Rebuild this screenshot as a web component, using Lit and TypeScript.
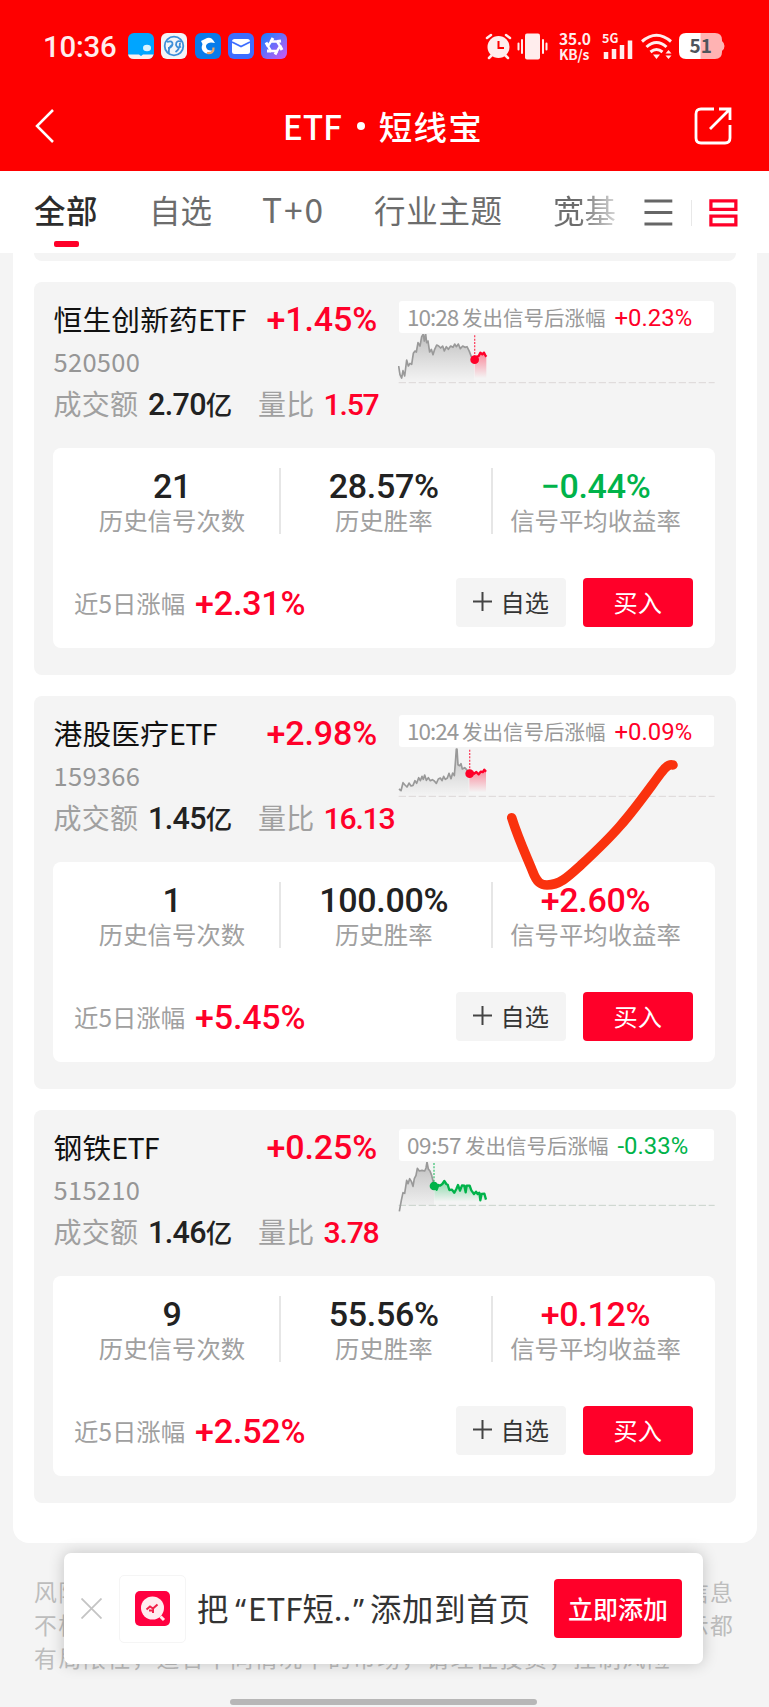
import { LitElement, html, css, svg } from "lit";
import { customElement, property } from "lit/decorators.js";

interface Fund {
  name: string; change: string; code: string; amount: string; ratio: string;
  time: string; since: string; signals: string; winRate: string; avg: string; five: string;
  chart: { box: string; past: string; now: string; dot: [number, number]; top: number; base: number; color: string };
}

const RED = "#ff0029";
const GREEN = "#00b34a";

const funds: Fund[] = [
  {
    name: "恒生创新药ETF", change: "+1.45%", code: "520500", amount: "2.70", ratio: "1.57",
    time: "10:28", since: "+0.23%", signals: "21", winRate: "28.57%", avg: "−0.44%", five: "+2.31%",
    chart: {
      box: "42 494 954 170",
      past: "44,590 48,616 53,626 57,604 62,620 68,572 73,590 78,582 83,585 88,552 93,545 97,548 102,520 108,530 113,502 118,494 121,515 125,494 128,520 132,515 137,548 142,540 147,556 152,540 158,527 164,530 170,536 176,530 181,545 187,532 193,540 200,530 207,534 212,524 217,532 223,524 229,538 236,530 243,534 249,532 256,546 262,562 270,570",
      now: "272,570 279,562 284,560 289,550 295,555 300,550 304,558 307,562",
      dot: [272, 571], top: 498, base: 640, color: RED,
    },
  },
  {
    name: "港股医疗ETF", change: "+2.98%", code: "159366", amount: "1.45", ratio: "16.13",
    time: "10:24", since: "+0.09%", signals: "1", winRate: "100.00%", avg: "+2.60%", five: "+5.45%",
    chart: {
      box: "42 175 954 170",
      past: "45,298 51,303 57,279 63,286 69,292 75,280 81,289 87,287 93,273 98,281 104,264 109,273 114,260 118,269 122,256 127,272 133,264 139,273 145,270 151,274 157,281 163,268 169,265 174,273 179,260 184,269 190,265 195,251 201,267 206,250 211,258 214,220 217,178 219,178 222,225 227,228 231,222 235,238 242,234 248,240 254,248",
      now: "256,251 264,247 270,252 277,247 284,254 290,246 297,247 301,240 306,246",
      dot: [257, 252], top: 180, base: 320, color: RED,
    },
  },
  {
    name: "钢铁ETF", change: "+0.25%", code: "515210", amount: "1.46", ratio: "3.78",
    time: "09:57", since: "-0.33%", signals: "9", winRate: "55.56%", avg: "+0.12%", five: "+2.52%",
    chart: {
      box: "42 155 954 170",
      past: "46,303 52,270 57,247 62,249 68,210 72,220 77,205 82,213 87,228 91,205 96,195 100,174 106,182 114,180 122,182 126,173 129,155 133,176 138,182 143,195 147,212 150,224",
      now: "151,226 158,238 163,224 168,226 175,221 181,212 187,221 191,223 196,239 204,238 211,247 217,236 222,224 228,241 234,225 241,226 245,246 248,226 257,226 262,240 270,251 276,244 281,251 286,247 289,270 293,251 301,250 306,268",
      dot: [150, 227], top: 158, base: 285, color: GREEN,
    },
  },
];

const tone = (v: string) => (/^[-−]/.test(v) ? "down" : "up");

@customElement("fund-card")
class FundCard extends LitElement {
  @property({ attribute: false }) fund!: Fund;

  static styles = css`
    :host { display: block; box-sizing: border-box; height: 393px; padding: 19px 19.5px 0 20px; border-radius: 8px; background: #f4f4f4; color: #222; }
    .num { font-family: Roboto, "Noto Sans CJK SC", sans-serif; font-weight: 500; }
    .up { color: #ff0029; }
    .down { color: #00b34a; }
    .head { display: grid; grid-template-columns: 345.5px 1fr; height: 147px; }
    .line { display: flex; align-items: baseline; white-space: nowrap; }
    .title { height: 40px; line-height: 36px; font-size: 28.7px; color: #111; }
    .name { width: 213px; letter-spacing: .2px; }
    .latin { letter-spacing: -.8px; }
    .title .num { font-size: 34px; letter-spacing: -.1px; }
    .code { height: 42.500px; line-height: 40px; font-size: 25.5px; letter-spacing: .3px; color: #969696; }
    .volume { line-height: 40px; font-size: 28px; letter-spacing: .2px; color: #a0a0a0; }
    .volume > * { flex: none; }
    .amount { margin-left: 10px; width: 110px; color: #222; font-size: 30.5px; letter-spacing: -.7px; }
    .yi { font-family: "Noto Sans CJK SC", sans-serif; font-size: 26.5px; }
    .ratio { margin-left: 9px; font-size: 30.2px; letter-spacing: -1.2px; }
    .badge { height: 32.5px; width: 315px; line-height: 30px; border-radius: 3px; background: #fff; box-sizing: border-box; padding-left: 8px; font-size: 20.5px; color: #999; }
    .clock { width: 55px; font-size: 22.5px; letter-spacing: -1px; }
    .slow { width: 58px; letter-spacing: -.4px; }
    .since { margin-left: 9px; font-family: Roboto, sans-serif; font-size: 23.9px; }
    .chart { display: block; margin-left: -1px; margin-top: .8px; width: 318px; height: 56.7px; }
    .panel { height: 200px; margin-left: -.5px; width: 662px; border-radius: 8px; background: #fff; }
    .stats { display: grid; grid-template-columns: 228px 212px 222px; padding-top: 20px; }
    .stat { height: 66px; text-align: center; box-sizing: border-box; border-right: 2px solid #e6e6e6; }
    .stat:nth-child(1) { padding-left: 12px; }
    .stat:nth-child(2) { padding-right: 4.500px; }
    .stat:nth-child(3) { border: 0; padding-right: 17px; }
    .value { height: 36px; line-height: 37px; font-size: 34px; letter-spacing: -.3px; }
    .label { line-height: 32px; font-size: 24.4px; color: #a0a0a0; }
    .foot { display: flex; align-items: center; padding: 44px 22px 0 21px; height: 50px; }
    .five { flex: 1; font-size: 24.4px; color: #a0a0a0; line-height: 36px; }
    .five .num { font-size: 34px; margin-left: 10px; letter-spacing: -.2px; }
    .days { line-height: 32px; position: relative; top: -2px; }
    .btn { box-sizing: border-box; width: 110.5px; height: 49px; border: 0; border-radius: 4px; padding: 0 0 2px; font: 24.2px/47px "Noto Sans CJK SC", sans-serif; display: flex; align-items: center; justify-content: center; }
    .watch { background: #f4f4f4; color: #333; gap: 9px; margin-right: 16.5px; }
    .plus { width: 19px; height: 19px; stroke: #444; stroke-width: 2; }
    .buy { background: #ff0029; color: #fff; }
  `;

  render() {
    const f = this.fund;
    const c = f.chart;
    const first = (p: string) => p.split(",")[0];
    const lastX = (p: string) => p.split(" ").pop()!.split(",")[0];
    return html`
      <div class="head">
        <div>
          <div class="line title"><span class="name">${f.name.replace("ETF", "")}<span class="latin">ETF</span></span><span class="num up">${f.change}</span></div>
          <div class="code">${f.code}</div>
          <div class="line volume"><span>成交额</span><span class="num amount">${f.amount}<span class="yi">亿</span></span><span>量比</span><span class="num up ratio">${f.ratio}</span></div>
        </div>
        <div>
          <div class="line badge"><span class="clock ${f.time[0] === "0" ? "slow" : ""}">${f.time}</span><span>发出信号后涨幅</span><span class="since ${tone(f.since)}">${f.since}</span></div>
          <svg class="chart" viewBox=${c.box}>
            <defs>
              <linearGradient id="past" x1="0" y1="0" x2="0" y2="1"><stop offset="0" stop-color="#888" stop-opacity=".5"/><stop offset="1" stop-color="#999" stop-opacity="0"/></linearGradient>
              <linearGradient id="now" x1="0" y1="0" x2="0" y2="1"><stop offset="0" stop-color=${c.color} stop-opacity=".45"/><stop offset=".85" stop-color=${c.color} stop-opacity="0"/></linearGradient>
            </defs>
            <path d="M${44} ${c.base}H992" stroke=${c.color === GREEN ? "#c8d2ca" : "#dcd7d7"} stroke-width="3" stroke-dasharray="22 8"/>
            <polygon points="${first(c.past)},${c.base} ${c.past} ${lastX(c.past)},${c.base}" fill="url(#past)"/>
            <polygon points="${first(c.now)},${c.base} ${c.now} ${lastX(c.now)},${c.base}" fill="url(#now)"/>
            <polyline points=${c.past} fill="none" stroke="#999" stroke-width="5" stroke-linejoin="round"/>
            <polyline points=${c.now} fill="none" stroke=${c.color} stroke-width="7" stroke-linejoin="round"/>
            <path d="M${c.dot[0]} ${c.top}V${c.dot[1]}" stroke=${c.color} stroke-opacity=".7" stroke-width="4" stroke-dasharray="6 4"/>
            <circle cx=${c.dot[0]} cy=${c.dot[1]} r="13" fill=${c.color}/>
          </svg>
        </div>
      </div>
      <div class="panel">
        <div class="stats">
          <div class="stat"><div class="num value">${f.signals}</div><div class="label">历史信号次数</div></div>
          <div class="stat"><div class="num value">${f.winRate}</div><div class="label">历史胜率</div></div>
          <div class="stat"><div class="num value ${tone(f.avg)}">${f.avg}</div><div class="label">信号平均收益率</div></div>
        </div>
        <div class="foot">
          <div class="line five"><span class="days">近5日涨幅</span><span class="num up">${f.five}</span></div>
          <button class="btn watch"><svg class="plus" viewBox="0 0 19 19"><path d="M9.5 0V19M0 9.5H19"/></svg>自选</button>
          <button class="btn buy">买入</button>
        </div>
      </div>`;
  }
}

const appIcons = [
  svg`<rect width="26" height="26" rx="6" fill="#00a5ff"/><path d="M0 21.500H11L13 23L15 21.500H25.500Q24 26 20 26H6Q1 26 0 21.500Z" fill="#fdeeee"/><ellipse cx="19" cy="15" rx="4" ry="3.200" fill="#d8f3ff"/>`,
  svg`<rect width="26" height="26" rx="6" fill="#f3f5f8"/><g fill="none" stroke="#3f8fd8" stroke-width="1.800"><circle cx="13" cy="13" r="9.300"/><path d="M6 9Q12 7 11.500 11.500Q10.500 15 7 15M8 20Q7 15 11 12M20.500 9Q15 6.500 15 12Q16.500 16 20 13.500M14.500 19Q19 16 19 10"/></g>`,
  svg`<rect width="26" height="26" rx="6" fill="#087bea"/><path d="M10 6Q15 3 18 7L20 10L16 9.500Q10.500 10 11 14Q12 18 17 17.500Q15 22 10 20Q5 17 7.500 11L6 8Z" fill="#fff"/><path d="M12 20Q19 21 18.500 14.500" stroke="#f0a868" stroke-width="2.200" fill="none"/>`,
  svg`<rect width="26" height="26" rx="6" fill="#3d6dff"/><rect x="4" y="6" width="18" height="15" rx="2.500" fill="#fff"/><path d="M4 9L13 13.500L22 9" stroke="#3d6dff" stroke-width="1.800" fill="none"/>`,
  svg`<defs><linearGradient id="violet" x1="0" y1="0" x2="1" y2="1"><stop offset=".1" stop-color="#247cff"/><stop offset=".9" stop-color="#c05cf4"/></linearGradient></defs><rect width="26" height="26" rx="6" fill="url(#violet)"/><path d="M10 8.500H16L19 13L16 18H10L7 13Z" fill="none" stroke="#fff" stroke-width="2.400"/><path d="M10 8.500L12 5M16 8.500L20 8M19 13L21 17M16 18L14 21.500M10 18L6 18M7 13L5 9.500" stroke="#fff" stroke-width="3"/>`,
];

@customElement("app-root")
class AppRoot extends LitElement {
  static styles = css`
    :host { display: block; position: relative; width: 769px; height: 1707px; overflow: hidden; background: #f4f4f4; font-family: "Noto Sans CJK SC", sans-serif; }
    .top { height: 171px; background: #fe0000; color: #fff; }
    .status { display: flex; align-items: center; height: 92px; box-sizing: border-box; padding: 0 44px 0 43px; }
    .time { width: 85px; font: 500 29.3px/30px Roboto, sans-serif; letter-spacing: -.2px; color: #ffeded; padding-top: 1px; }
    .apps { display: flex; gap: 7.3px; flex: 1; }
    .app { width: 26px; height: 26px; }
    .alarm { width: 27px; height: 27px; margin-right: 5px; }
    .vibe { width: 31px; height: 27px; margin-right: 11px; }
    .speed { width: 43px; font: 700 15.500px/15px "Noto Sans CJK SC", sans-serif; color: #ffeded; letter-spacing: -.2px; white-space: nowrap; }
    .unit { font-size: 13.800px; }
    .cell { width: 31px; height: 28px; margin-right: 8px; overflow: visible; }
    .wifi { width: 31px; height: 27px; margin-right: 7px; }
    .battery { width: 46px; height: 26px; overflow: visible; }
    .celltext { font: 700 12.500px "Noto Sans CJK SC", sans-serif; }
    .battext { font: 700 19px "Noto Sans CJK SC", sans-serif; }
    .nav { display: flex; align-items: center; justify-content: space-between; height: 68px; padding: 0 37px 0 34px; }
    .back { width: 22px; height: 36px; }
    .title { font-size: 33.500px; font-weight: 500; line-height: 40px; display: flex; align-items: center; margin-left: 16px; letter-spacing: 1.300px; }
    .etf { letter-spacing: -.2px; }
    .dot { width: 8px; height: 8px; border-radius: 50%; background: #fff; margin: 0 14px 0 15px; }
    .share { width: 38px; height: 38px; }
    .tabs { display: flex; align-items: flex-start; height: 82px; box-sizing: border-box; padding: 14px 31px 0 34px; background: #fff; font-size: 31.5px; line-height: 48px; color: #6c6c6c; white-space: nowrap; }
    .tab { flex: none; }
    .active { color: #2c2c2c; font-weight: 500; width: 115px; letter-spacing: .4px; }
    .mark { width: 24.500px; height: 6.500px; margin: 7.500px 0 0 20px; border-radius: 2px; background: #ff0029; }
    .t2 { width: 113px; }
    .t3 { width: 112px; font-size: 33.500px; letter-spacing: 1.900px; }
    .t4 { width: 179px; letter-spacing: .7px; }
    .t5 { width: 91px; background: linear-gradient(90deg, #6c6c6c 25px, #fff 78px); background-clip: text; -webkit-background-clip: text; color: transparent; }
    .menu { width: 30px; height: 30px; margin: 13px 18px 0 0; }
    .sep { width: 1.500px; height: 26px; background: #e8e8e8; margin: 15px 17px 0 0; }
    .layout { width: 30px; height: 30px; margin-top: 13px; }
    .list { margin: 0 12.500px; height: 1290px; box-sizing: border-box; padding: 0 21px; background: #fff; border-radius: 0 0 16px 16px; display: flex; flex-direction: column; gap: 20.800px; }
    .tail { height: 8.200px; background: #f4f4f4; border-radius: 0 0 8px 8px; }
    .tick { position: absolute; left: 500px; top: 750px; width: 190px; height: 150px; }
    .risk { padding: 32px 0 0 34px; font-size: 22.800px; letter-spacing: 1.350px; line-height: 33px; color: #bdbdbd; white-space: nowrap; }
    .last { letter-spacing: 1.720px; }
    .prompt { position: absolute; left: 64px; top: 1553px; width: 639px; height: 111px; box-sizing: border-box; padding: 0 21px 0 17px; display: flex; align-items: center; border-radius: 7px; background: #fff; box-shadow: 0 0 16px rgba(0, 0, 0, .2); }
    .close { width: 21px; height: 21px; margin-right: 17px; }
    .tile { width: 67px; height: 68px; box-sizing: border-box; border: 1px solid #f5f5f5; border-radius: 5px; display: flex; align-items: center; justify-content: center; margin-right: 11px; }
    .logo { width: 35px; height: 35px; }
    .ask { flex: 1; font-size: 31.300px; color: #333; white-space: nowrap; line-height: 44px; padding-top: 1px; letter-spacing: .9px; }
    .quote { font-family: "Noto Sans", sans-serif; font-size: 30px; letter-spacing: 0; }
    .open { margin: 0 2px 0 6px; }
    .shut { margin: 0 6px 0 2px; }
    .short { letter-spacing: 0; }
    .add { width: 128px; height: 59px; border: 0; border-radius: 4px; padding: 0; background: #ff0029; color: #fff; font: 500 25px/59px "Noto Sans CJK SC", sans-serif; }
    .home { position: absolute; left: 230px; top: 1699px; width: 307px; height: 6px; border-radius: 3px; background: #b7b7b7; }
  `;

  render() {
    return html`
      <header class="top">
        <div class="status">
          <div class="time">10:36</div>
          <div class="apps">${appIcons.map((i) => html`<svg class="app" viewBox="0 0 26 26">${i}</svg>`)}</div>
          <svg class="alarm" viewBox="0 0 27 27"><g stroke="#ffeded" stroke-width="2.500" stroke-linecap="round"><path d="M2 5L6 2M25 5L21 2M4 25L7 22M23 25L20 22"/></g><circle cx="13.500" cy="14" r="11" fill="#ffeded"/><path d="M13.500 8V15H19" stroke="#fe0000" stroke-width="2" fill="none"/></svg>
          <svg class="vibe" viewBox="0 0 31 27"><rect x="8" y="0.500" width="15" height="26" rx="2" fill="#ffeded"/><path d="M1.500 10.500V16.500M5 7V20M26 7V20M29.500 10.500V16.500" stroke="#ffeded" stroke-width="2" stroke-linecap="round"/></svg>
          <div class="speed">35.0<br><span class="unit">KB/s</span></div>
          <svg class="cell" viewBox="0 0 31 28"><text class="celltext" x="0" y="10.500" fill="#ffeded">5G</text><path d="M4 20V27M12 17V27M20 13V27M28 8.500V27" stroke="#ffeded" stroke-width="4.500"/></svg>
          <svg class="wifi" viewBox="0 0 31 27"><g fill="none" stroke="#ffeded" stroke-width="3"><path d="M1 8.500Q15.500 -4 30 8.500M5.500 14Q15.500 5 25.500 14M9.500 19Q15.500 14 21.500 19"/></g><path d="M12 21.500H19L15.500 26ZM24.500 20.500L27.500 17L30.500 20.500ZM24.500 22.500L27.500 26L30.500 22.500Z" fill="#ffeded"/></svg>
          <svg class="battery" viewBox="0 0 46 26"><path d="M21 0H36Q43 0 43 7V8Q45.500 10 45.500 13T43 18V19Q43 26 36 26H21Z" fill="#ffb3b3"/><path d="M7 0H21.500V26H7Q0 26 0 19V7Q0 0 7 0Z" fill="#fff"/><text class="battext" x="10.500" y="20" fill="#4e555c">51</text></svg>
        </div>
        <div class="nav">
          <svg class="back" viewBox="0 0 22 36"><path d="M19 2L3 18L19 34" fill="none" stroke="#fff" stroke-width="2.500"/></svg>
          <div class="title"><span class="etf">ETF</span><i class="dot"></i>短线宝</div>
          <svg class="share" viewBox="0 0 38 38"><path d="M20 2H7Q2 2 2 7V31Q2 36 7 36H31Q36 36 36 31V18M25 2H36V13M36 2L16 22" fill="none" stroke="#fff" stroke-width="2.800"/></svg>
        </div>
      </header>
      <nav class="tabs">
        <div class="tab active">全部<div class="mark"></div></div>
        <div class="tab t2">自选</div>
        <div class="tab t3">T+0</div>
        <div class="tab t4">行业主题</div>
        <div class="tab t5">宽基</div>
        <svg class="menu" viewBox="0 0 30 30"><path d="M.5 2.500H29.500M.5 14.500H29.500M.5 26.500H29.500" stroke="#666" stroke-width="3"/></svg>
        <div class="sep"></div>
        <svg class="layout" viewBox="0 0 30 30"><path d="M2 2.300H28V11.300H2ZM2 18.300H28V27.500H2Z" fill="none" stroke="#ff0029" stroke-width="3.400"/></svg>
      </nav>
      <main class="list">
        <div class="tail"></div>
        ${funds.map((f) => html`<fund-card .fund=${f}></fund-card>`)}
      </main>
      <footer class="risk">风险提示：本页面历史信号数据及收益率仅供参考，上述全部信息<br>不构成任何投资建议，也不保证未来收益，任何技术指标的展示都<br><span class="last">有局限性，适合不同情况下的市场，请理性投资，控制风险</span></footer>
      <svg class="tick" viewBox="500 750 190 150"><path d="M511.700 817.700C518 838 526 855 532.500 871C537 883 541 885 547 885C560 885 569 876 580 866C594 853 607 841 620 826C636 808 649 789 661 773Q668 763 673 765" fill="none" stroke="#fa320e" stroke-width="9.500" stroke-linecap="round" stroke-linejoin="round"/></svg>
      <aside class="prompt">
        <svg class="close" viewBox="0 0 21 21"><path d="M.5 .5L20.500 20.500M20.500 .5L.5 20.500" stroke="#c4c4c4" stroke-width="1.800"/></svg>
        <div class="tile"><svg class="logo" viewBox="0 0 35 35"><rect width="35" height="35" rx="5" fill="#ff0040"/><circle cx="17.500" cy="17" r="11.500" fill="#ffecef"/><path d="M25.500 25.500L29 29" stroke="#ffecef" stroke-width="3"/><path d="M11.500 18.500L15 15.500L18 17.500L22.500 13.500M14 19.500H19M18 17V22" fill="none" stroke="#f02048" stroke-width="2"/></svg></div>
        <div class="ask">把<span class="quote open">“</span><span class="short">ETF短..</span><span class="quote shut">”</span>添加到首页</div>
        <button class="add">立即添加</button>
      </aside>
      <div class="home"></div>`;
  }
}
